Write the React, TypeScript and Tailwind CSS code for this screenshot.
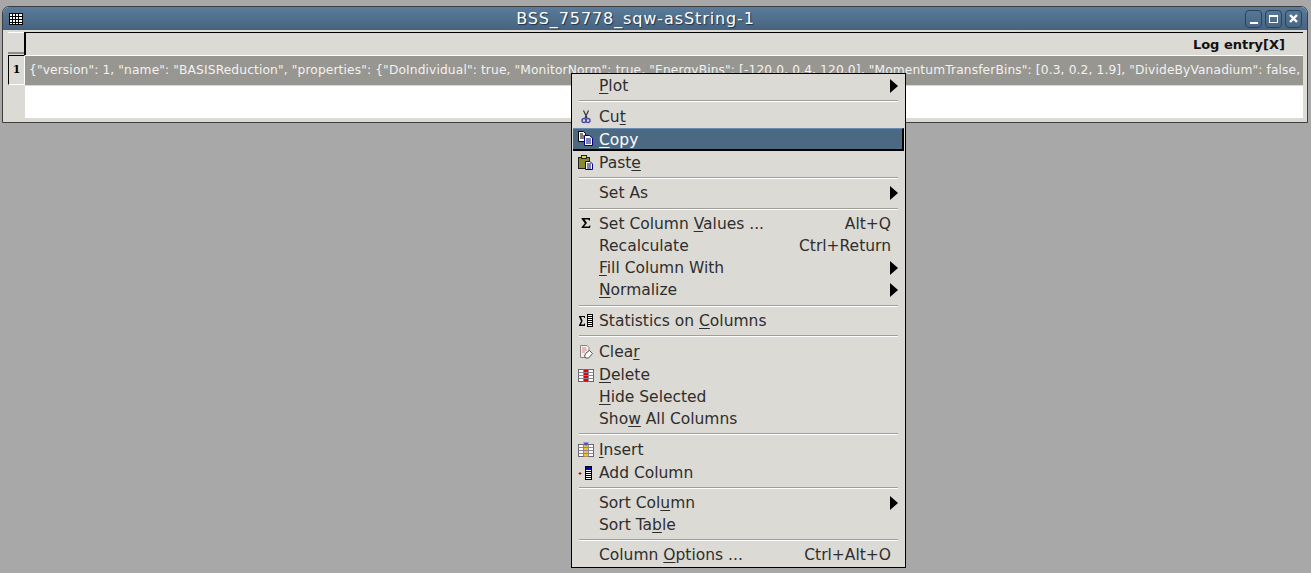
import type { ReactNode } from 'react';

const logText =
  '{"version": 1, "name": "BASISReduction", "properties": {"DoIndividual": true, "MonitorNorm": true, "EnergyBins": [-120.0, 0.4, 120.0], "MomentumTransferBins": [0.3, 0.2, 1.9], "DivideByVanadium": false,';

const CutIcon = () => (
  <svg width="16" height="16" viewBox="0 0 16 16">
    <path d="M5.5 1.5 L9 9 M10.5 1.5 L7 9" stroke="#333" strokeWidth="1.2" fill="none" />
    <circle cx="6" cy="11.5" r="2" fill="none" stroke="#4a4aa8" strokeWidth="1.4" />
    <circle cx="10" cy="11.5" r="2" fill="none" stroke="#4a4aa8" strokeWidth="1.4" />
  </svg>
);

const CopyIcon = () => (
  <svg width="16" height="16" viewBox="0 0 16 16">
    <path d="M0.5 0.5 H5.5 L7.5 2.5 V10.5 H0.5 Z" fill="#fff" stroke="#000" />
    <path d="M2 3 H5 M2 5 H6 M2 7 H6" stroke="#000" />
    <path d="M6.5 4.5 H11.5 L14.5 7 V14.5 H6.5 Z" fill="#fff" stroke="#00007a" />
    <path d="M8 8 H13 M8 10 H13 M8 12 H13" stroke="#00007a" />
  </svg>
);

const PasteIcon = () => (
  <svg width="16" height="16" viewBox="0 0 16 16">
    <rect x="0.5" y="2.5" width="11" height="11" fill="#8a8a2a" stroke="#222" />
    <rect x="3.5" y="0.5" width="5" height="3" fill="#e8d050" stroke="#222" />
    <path d="M7.5 6.5 H12 L14.5 9 V14.5 H7.5 Z" fill="#fff" stroke="#00007a" />
    <path d="M9 9 H13 M9 11 H13 M9 13 H13" stroke="#00007a" />
  </svg>
);

const SigmaIcon = () => (
  <svg width="16" height="16" viewBox="0 0 16 16">
    <path d="M3.5 2 H12 V4.5 H11 L10.5 3.5 H6.5 L9 7 L6 10.5 H11 L11.5 9.5 H12.5 L12 12 H3.5 V11.2 L6.8 7.3 L3.5 2.8 Z" fill="#000" />
  </svg>
);

const StatsIcon = () => (
  <svg width="16" height="16" viewBox="0 0 16 16">
    <path d="M1 3 H7 V5 H6.3 L6 4 H3 L4.6 7.8 L3 11.5 H6 L6.3 10.5 H7 V13 H1 V12.3 L3 8 L1 3.7 Z" fill="#000" />
    <rect x="9.5" y="1.5" width="5" height="12" fill="#fff" stroke="#000" />
    <path d="M10 3.5 H14 M10 5.5 H14 M10 7.5 H14 M10 9.5 H14 M10 11.5 H14" stroke="#000" />
  </svg>
);

const ClearIcon = () => (
  <svg width="16" height="16" viewBox="0 0 16 16">
    <path d="M2.5 1.5 H9 L11 3.5 V8 L7 13.5 H2.5 Z" fill="#f4eeee" stroke="#888" />
    <path d="M4 4 H8 M4 6 H9 M4 8 H7" stroke="#e08080" />
    <path d="M8 9 L11.5 6.5 L14.5 9.5 L10.5 14 H7.5 L6.5 12 Z" fill="#fff" stroke="#555" />
  </svg>
);

const TableGrid = ({ children }: { children: ReactNode }) => (
  <svg width="16" height="16" viewBox="0 0 16 16">
    <rect x="0.5" y="2.5" width="15" height="12" fill="#fff" stroke="#667" />
    {children}
    <path d="M5.5 2.5 V14.5 M10.5 2.5 V14.5 M0.5 5.5 H15.5 M0.5 8.5 H15.5 M0.5 11.5 H15.5" stroke="#889" strokeWidth="1" fill="none" />
  </svg>
);

const DeleteIcon = () => (
  <TableGrid>
    <rect x="6" y="3" width="4.5" height="11.5" fill="#e80000" />
  </TableGrid>
);

const InsertIcon = () => (
  <TableGrid>
    <rect x="6" y="3" width="4.5" height="11.5" fill="#f0c040" />
    <path d="M5 0.5 H11 L8 4 Z" fill="#5050d0" />
  </TableGrid>
);

const AddColumnIcon = () => (
  <svg width="16" height="16" viewBox="0 0 16 16">
    <path d="M0.5 8.5 H3.5 M2 7 V10" stroke="#e00000" />
    <rect x="7.5" y="1.5" width="6" height="13" fill="#fff" stroke="#000" />
    <rect x="8" y="2" width="5" height="3" fill="#0000d0" />
    <path d="M8 6.5 H13 M8 8.5 H13 M8 10.5 H13 M8 12.5 H13" stroke="#000" />
  </svg>
);

type Item = {
  label: string;
  mnemonic?: number;
  icon?: ReactNode;
  shortcut?: string;
  submenu?: boolean;
  active?: boolean;
  tall?: boolean;
};

type Sep = { wide: boolean };

const thin: Sep = { wide: false };
const wide: Sep = { wide: true };

const menu: (Item | Sep)[] = [
  { label: 'Plot', mnemonic: 0, submenu: true },
  thin,
  { label: 'Cut', mnemonic: 2, icon: <CutIcon />, tall: true },
  { label: 'Copy', mnemonic: 0, icon: <CopyIcon />, active: true, tall: true },
  { label: 'Paste', mnemonic: 4, icon: <PasteIcon />, tall: true },
  thin,
  { label: 'Set As', submenu: true },
  wide,
  { label: 'Set Column Values ...', mnemonic: 11, icon: <SigmaIcon />, shortcut: 'Alt+Q' },
  { label: 'Recalculate', shortcut: 'Ctrl+Return' },
  { label: 'Fill Column With', mnemonic: 0, submenu: true },
  { label: 'Normalize', mnemonic: 0, submenu: true },
  wide,
  { label: 'Statistics on Columns', mnemonic: 14, icon: <StatsIcon /> },
  thin,
  { label: 'Clear', mnemonic: 4, icon: <ClearIcon />, tall: true },
  { label: 'Delete', mnemonic: 0, icon: <DeleteIcon />, tall: true },
  { label: 'Hide Selected', mnemonic: 0 },
  { label: 'Show All Columns', mnemonic: 3 },
  thin,
  { label: 'Insert', mnemonic: 0, icon: <InsertIcon />, tall: true },
  { label: 'Add Column', icon: <AddColumnIcon />, tall: true },
  thin,
  { label: 'Sort Column', mnemonic: 8, submenu: true },
  { label: 'Sort Table', mnemonic: 7 },
  thin,
  { label: 'Column Options ...', mnemonic: 7, shortcut: 'Ctrl+Alt+O' },
];

function Label({ text, at }: { text: string; at?: number }) {
  if (at === undefined) return <span>{text}</span>;
  return (
    <span>
      {text.slice(0, at)}
      <span className="underline decoration-1 underline-offset-2">{text[at]}</span>
      {text.slice(at + 1)}
    </span>
  );
}

function MenuRow({ item }: { item: Item }) {
  return (
    <div
      className={
        item.active
          ? 'flex h-[23px] items-center border-t border-r-2 border-b-2 border-t-[#6a8cb0] border-r-black border-b-black bg-[#4b6983] text-white'
          : item.tall
            ? 'flex h-[23px] items-center'
            : 'flex h-[22px] items-center'
      }
    >
      <span className="flex w-[26px] shrink-0 justify-center">{item.icon}</span>
      <span className={item.active ? 'flex-1 pt-[4px] whitespace-nowrap' : 'flex-1 pt-[2px] whitespace-nowrap'}>
        <Label text={item.label} at={item.mnemonic} />
      </span>
      {item.shortcut && <span className="pt-[2px] pr-[13px] whitespace-nowrap">{item.shortcut}</span>}
      {item.submenu && <span className="mr-[6px] h-0 w-0 border-y-[7px] border-l-[8px] border-y-transparent border-l-black" />}
    </div>
  );
}

export default function App() {
  return (
    <div className="relative h-[573px] w-[1311px] overflow-hidden bg-[#a8a8a8] pt-[6px] pr-[3px] pl-[2px] font-['DejaVu_Sans',sans-serif]">
      <div className="h-[117px] rounded-t-[7px] border border-[#3e3e3e] bg-[#dcdad5]">
        <div className="flex h-[23px] items-center rounded-t-[6px] bg-gradient-to-b from-[#5a7b9b] to-[#466480] pr-[5px] pl-[6px]">
          <svg width="14" height="12" viewBox="0 0 14 12" className="shrink-0">
            <rect x="0.5" y="0.5" width="13" height="11" fill="#fff" stroke="#000" />
            <path d="M3.5 0 V12 M6.5 0 V12 M9.5 0 V12 M0 3.5 H14 M0 6.5 H14 M0 9.5 H14" stroke="#000" />
          </svg>
          <div className="flex-1 pl-[3px] text-center text-[16px] font-normal tracking-[0.9px] whitespace-nowrap text-white [text-shadow:1px_1px_1px_#1f3346]">BSS_75778_sqw-asString-1</div>
          <div className="flex gap-[3px]">
            <span className="flex h-[18px] w-[17px] items-end justify-center rounded-[4px] border border-[#2d4358] pb-[3px]">
              <span className="h-[2px] w-[8px] bg-white" />
            </span>
            <span className="flex h-[18px] w-[17px] items-center justify-center rounded-[4px] border border-[#2d4358]">
              <span className="h-[8px] w-[9px] border border-t-2 border-white" />
            </span>
            <span className="flex h-[18px] w-[17px] items-center justify-center rounded-[4px] border border-[#2d4358]">
              <svg width="11" height="11" viewBox="0 0 11 11">
                <path d="M2 2 L9 9 M9 2 L2 9" stroke="#fff" strokeWidth="2.4" />
              </svg>
            </span>
          </div>
        </div>

        <div className="mt-[2px] mr-[4px] ml-[5px]">
          <div className="flex h-[23px]">
            <div className="h-[22px] w-[16px] border-t border-b-2 border-t-white border-b-[#8e8c86]" />
            <div className="flex flex-1 items-center justify-end border-t border-l-2 border-t-black border-l-black pt-[1px] pr-[18px] text-[13px] font-bold whitespace-nowrap text-[#111]">
              Log entry[X]
            </div>
          </div>
          <div className="flex h-[30px]">
            <div className="flex w-[17px] items-center justify-center border-t border-r border-b border-l border-t-black border-r-white border-b-white border-l-black pt-[1px] font-['DejaVu_Serif',serif] text-[11px] font-bold text-black">
              1
            </div>
            <div className="flex min-w-0 flex-1 items-center border-t border-t-white bg-[#989690] pb-[1px] pl-[4px] text-[12.25px] tracking-[0.12px] whitespace-nowrap text-[#f2f2f2]">
              {logText}
            </div>
          </div>
          <div className="ml-[17px] h-[33px] border-t border-t-[#d8d8d8] bg-white" />
        </div>
      </div>

      <div className="absolute top-[73px] left-[571px] w-[335px] border border-black bg-[#dcdad5] p-[1px] text-[15.5px] text-[#2e2e2e]">
        {menu.map((item, i) =>
          'wide' in item ? (
            <div key={i} className={item.wide ? 'flex h-[9px] items-center px-[6px]' : 'flex h-[8px] items-center px-[6px]'}>
              <div className="h-[2px] w-full border-t border-b border-t-[#a09e98] border-b-white" />
            </div>
          ) : (
            <MenuRow key={item.label} item={item} />
          ),
        )}
      </div>
    </div>
  );
}
